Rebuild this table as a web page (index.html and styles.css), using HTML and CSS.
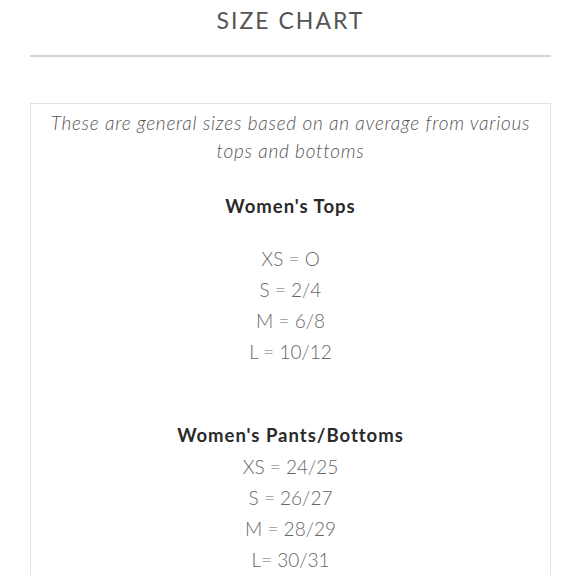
FILE: index.html
```html
<!DOCTYPE html>
<html lang="en">
<head>
<meta charset="utf-8">
<title>Size Chart</title>
<link rel="stylesheet" href="styles.css">
</head>
<body>
<div class="page">
  <h1 class="title">SIZE CHART</h1>
  <div class="rule"></div>
  <section class="box">
    <p class="intro">These are general sizes based on an average from various tops and bottoms</p>
    <h2 class="heading heading-tops">Women's Tops</h2>
    <ul class="sizes sizes-tops">
      <li>XS = O</li>
      <li>S = 2/4</li>
      <li>M = 6/8</li>
      <li>L = 10/12</li>
    </ul>
    <h2 class="heading heading-pants">Women's Pants/Bottoms</h2>
    <ul class="sizes">
      <li>XS = 24/25</li>
      <li>S = 26/27</li>
      <li>M = 28/29</li>
      <li>L= 30/31</li>
    </ul>
  </section>
</div>
</body>
</html>
```
FILE: styles.css
```css
html, body {
  margin: 0;
  padding: 0;
  background: #fff;
}
.page {
  padding: 0 29px 0 30px;
  font-family: "Lato", "Open Sans", sans-serif;
}
.title {
  margin: 0;
  padding-top: 6px;
  text-align: center;
  font-family: "Lato", sans-serif;
  font-weight: 400;
  font-size: 23px;
  line-height: 28px;
  letter-spacing: 2px;
  color: #555;
}
.rule {
  margin-top: 21px;
  height: 2px;
  background: #d4d4d4;
}
.box {
  margin-top: 46px;
  border: 1px solid #e2e2e2;
  border-bottom: none;
  padding: 5px 14px 0;
  text-align: center;
}
.intro {
  margin: 0;
  font-style: italic;
  font-size: 19px;
  line-height: 28px;
  letter-spacing: 0.75px;
  color: #555;
  font-weight: 300;
}
.heading {
  margin: 0;
  font-size: 18.5px;
  line-height: 31px;
  font-weight: 700;
  letter-spacing: 1px;
  color: #2a2a2a;
}
.heading-tops {
  margin-top: 26px;
}
.heading-pants {
  margin-top: 53px;
}
.sizes {
  list-style: none;
  margin: 0;
  padding: 0;
  font-size: 19px;
  line-height: 31px;
  color: #666;
  font-weight: 300;
}
.sizes-tops {
  margin-top: 21px;
}
```
